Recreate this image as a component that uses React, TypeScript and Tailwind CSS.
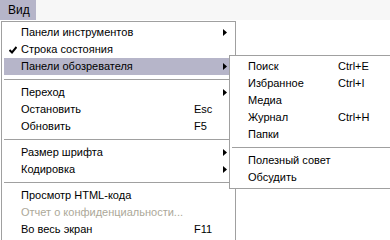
const mainItems = [
  { label: "Панели инструментов", arrow: true },
  { label: "Строка состояния", checked: true },
  { label: "Панели обозревателя", arrow: true, active: true },
  { sep: true },
  { label: "Переход", arrow: true },
  { label: "Остановить", shortcut: "Esc" },
  { label: "Обновить", shortcut: "F5" },
  { sep: true },
  { label: "Размер шрифта", arrow: true },
  { label: "Кодировка", arrow: true },
  { sep: true },
  { label: "Просмотр HTML-кода" },
  { label: "Отчет о конфиденциальности...", disabled: true },
  { label: "Во весь экран", shortcut: "F11" },
];

const subItems = [
  { label: "Поиск", shortcut: "Ctrl+E" },
  { label: "Избранное", shortcut: "Ctrl+I" },
  { label: "Медиа" },
  { label: "Журнал", shortcut: "Ctrl+H" },
  { label: "Папки" },
  { sep: true },
  { label: "Полезный совет" },
  { label: "Обсудить" },
];

function Arrow() {
  return (
    <svg width="4" height="7" viewBox="0 0 4 7">
      <path d="M0 0 L4 3.5 L0 7 Z" fill="#000" />
    </svg>
  );
}

function Check() {
  return (
    <svg width="8" height="8" viewBox="0 0 8 8">
      <path d="M0.5 4 L3 6.5 L7.5 1" stroke="#000" strokeWidth="2" fill="none" />
    </svg>
  );
}

export default function App() {
  return (
    <div className="relative w-[390px] h-[240px] overflow-hidden bg-white text-[11px] text-black font-['Liberation_Sans',sans-serif]">
      {/* menu bar */}
      <div className="h-[20px] flex bg-[#f7f7f7]">
        <div className="w-[36px] h-[20px] bg-[#b6b5c9] flex items-center pl-[8px] text-[12px]">Вид</div>
      </div>

      {/* main menu */}
      <div className="absolute left-[1px] top-[21px] w-[235px] border border-[#a0a0a0] bg-white p-[2px]">
        {mainItems.map((it, i) =>
          it.sep ? (
            <div key={i} className="h-[9px] flex items-center">
              <div className="w-full h-px bg-[#a0a0a0]" />
            </div>
          ) : (
            <div
              key={i}
              className={`h-[17px] grid grid-cols-[17px_1fr_29px_4px] items-center pr-[6px] ${
                it.active ? "bg-[#b6b5c9]" : ""
              } ${it.disabled ? "text-[#aca899]" : ""}`}
            >
              <span className="flex justify-center pl-[1px]">{it.checked && <Check />}</span>
              <span className="whitespace-nowrap">{it.label}</span>
              <span>{it.shortcut}</span>
              <span className="flex">{it.arrow && <Arrow />}</span>
            </div>
          )
        )}
      </div>

      {/* submenu */}
      <div className="absolute left-[229px] top-[55px] w-[170px] border border-[#a0a0a0] bg-white p-[2px]">
        {subItems.map((it, i) =>
          it.sep ? (
            <div key={i} className="h-[9px] flex items-center">
              <div className="w-full h-px bg-[#a0a0a0]" />
            </div>
          ) : (
            <div key={i} className="h-[17px] flex items-center pl-[16px]">
              <span className="w-[90px] whitespace-nowrap">{it.label}</span>
              <span>{it.shortcut}</span>
            </div>
          )
        )}
      </div>
    </div>
  );
}
